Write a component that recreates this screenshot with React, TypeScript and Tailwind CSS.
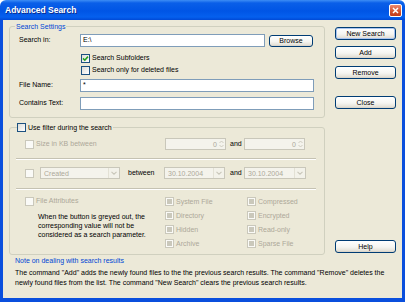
import React from "react";

type CheckProps = { checked?: boolean; disabled?: boolean; mixed?: boolean };

function Check({ checked = false, disabled = false, mixed = false }: CheckProps) {
  return (
    <span
      className={`flex h-[9px] w-[9px] shrink-0 items-center justify-center border ${
        disabled
          ? "border-[#CAC8BB] bg-[#FAFAF7]"
          : "border-[#1C5180] bg-[linear-gradient(135deg,#DCDCD7_0%,#FFFFFF_100%)]"
      }`}
    >
      {checked && (
        <svg width="7" height="7" viewBox="0 0 7 7">
          <path d="M1 3.4 L2.8 5.2 L6 1.6" stroke="#21A121" strokeWidth="1.6" fill="none" />
        </svg>
      )}
      {mixed && <span className="h-[5px] w-[5px] bg-[#CAC8BB]" />}
    </span>
  );
}

function XPButton({ label, isDefault = false, className = "" }: { label: string; isDefault?: boolean; className?: string }) {
  return (
    <div
      className={`flex h-[13px] w-[61px] items-center justify-center rounded-[3px] border border-[#003C74] bg-[linear-gradient(180deg,#FFFFFF_0%,#F5F5F1_55%,#E6E3DA_85%,#D6D0C5_100%)] text-[7px] leading-none text-black ${
        isDefault ? "shadow-[inset_0_0_0_1px_#A9C4F0]" : ""
      } ${className}`}
    >
      {label}
    </div>
  );
}

function Arrow() {
  return (
    <span className="flex h-full w-[11px] items-center justify-center border-l border-[#E3E1D5] bg-[#F3F2EA]">
      <svg width="6" height="4" viewBox="0 0 6 4">
        <path d="M0.5 0.8 L3 3.2 L5.5 0.8" stroke="#C9C7BA" strokeWidth="1.1" fill="none" />
      </svg>
    </span>
  );
}

function Combo({ value, width }: { value: string; width: string }) {
  return (
    <div className={`flex h-[12px] ${width} items-center border border-[#C9C7BA] bg-[#F4F3EC]`}>
      <span className="flex-1 pl-[3px] text-[7px] leading-none text-[#ACA899]">{value}</span>
      <Arrow />
    </div>
  );
}

function Spinner() {
  return (
    <div className="flex h-[12px] w-[61px] items-center justify-end border border-[#C9C7BA] bg-[#F4F3EC] pr-[1px]">
      <span className="text-[7px] leading-none text-[#ACA899]">0</span>
      <svg className="ml-[2px]" width="5" height="8" viewBox="0 0 5 8">
        <path d="M0.5 3 L2.5 1 L4.5 3 M0.5 5 L2.5 7 L4.5 5" stroke="#C9C7BA" strokeWidth="0.9" fill="none" />
      </svg>
    </div>
  );
}

function Separator() {
  return <div className="ml-[6px] h-[2px] w-[300px] border-t border-b border-t-[#C5C2B2] border-b-white" />;
}

function Attr({ label }: { label: string }) {
  return (
    <div className="flex h-[12px] items-center">
      <Check disabled mixed />
      <span className="ml-[2px] text-[7px] leading-none text-[#ACA899]">{label}</span>
    </div>
  );
}

export default function App() {
  return (
    <div className="flex h-[302px] w-[405px] flex-col overflow-hidden rounded-t-[6px] font-['Liberation_Sans',Arial,sans-serif] text-[7px] text-black">
      {/* title bar */}
      <div className="flex h-[20px] shrink-0 items-center justify-between bg-[linear-gradient(180deg,#3D8DF5_0%,#0A5FE8_15%,#0055E5_55%,#0560EE_85%,#0049D6_100%)] pl-[5px] pr-[3px]">
        <span className="text-[8.5px] font-bold leading-none text-white [text-shadow:1px_1px_0_#0A2C8C]">Advanced Search</span>
        <div className="flex h-[13px] w-[13px] items-center justify-center rounded-[2px] border border-white bg-[linear-gradient(180deg,#EB8A70_0%,#D5552F_55%,#C23C1B_100%)]">
          <svg width="7" height="7" viewBox="0 0 7 7">
            <path d="M1 1 L6 6 M6 1 L1 6" stroke="white" strokeWidth="1.5" />
          </svg>
        </div>
      </div>

      {/* body */}
      <div className="flex flex-1 flex-col border-x-[3px] border-b-[4px] border-[#0A4FDD] bg-[#ECE9D8]">
        {/* settings + buttons */}
        <div className="flex items-start">
          <div className="relative ml-[6px] mt-[6px] h-[92px] w-[316px] rounded-[3px] border border-[#D0D0BF]">
            <span className="absolute left-[5px] top-[-5px] bg-[#ECE9D8] px-[1px] text-[7px] leading-[9px] text-[#0046D5]">
              Search Settings
            </span>
            <div className="flex flex-col pt-[7px]">
              <div className="flex h-[13px] items-center">
                <span className="ml-[9px] w-[61px]">Search in:</span>
                <div className="flex h-[13px] w-[185px] items-center border border-[#7F9DB9] bg-white pl-[2px]">E:\</div>
                <XPButton label="Browse" className="ml-[4px] !h-[12px] !w-[44px]" />
              </div>
              <div className="mt-[5px] flex h-[12px] items-center pl-[71px]">
                <Check checked />
                <span className="ml-[2px]">Search Subfolders</span>
              </div>
              <div className="flex h-[12px] items-center pl-[71px]">
                <Check />
                <span className="ml-[2px]">Search only for deleted files</span>
              </div>
              <div className="mt-[3px] flex h-[13px] items-center">
                <span className="ml-[9px] w-[61px]">File Name:</span>
                <div className="flex h-[13px] w-[234px] items-center border border-[#7F9DB9] bg-white pl-[2px]">*</div>
              </div>
              <div className="mt-[5px] flex h-[13px] items-center">
                <span className="ml-[9px] w-[61px]">Contains Text:</span>
                <div className="h-[13px] w-[234px] border border-[#7F9DB9] bg-white" />
              </div>
            </div>
          </div>
          <div className="ml-[10px] mt-[7px] flex flex-col">
            <XPButton label="New Search" isDefault />
            <XPButton label="Add" className="mt-[6px]" />
            <XPButton label="Remove" className="mt-[7px]" />
            <XPButton label="Close" className="mt-[17px]" />
          </div>
        </div>

        {/* filter + help */}
        <div className="mt-[9px] flex items-end">
          <div className="relative ml-[6px] h-[128px] w-[316px] rounded-[3px] border border-[#D0D0BF]">
            <div className="absolute left-[7px] top-[-5px] flex h-[9px] items-center bg-[#ECE9D8] pr-[1px]">
              <Check />
              <span className="ml-[2px] leading-none">Use filter during the search</span>
            </div>
            <div className="flex flex-col pt-[10px]">
              <div className="flex h-[12px] items-center">
                <div className="ml-[15px] flex w-[140px] items-center">
                  <Check disabled />
                  <span className="ml-[2px] text-[#ACA899]">Size in KB between</span>
                </div>
                <Spinner />
                <span className="ml-[4px] w-[14px]">and</span>
                <Spinner />
              </div>
              <div className="mt-[8px]">
                <Separator />
              </div>
              <div className="mt-[7px] flex h-[12px] items-center">
                <div className="ml-[15px]">
                  <Check disabled />
                </div>
                <div className="ml-[6px]">
                  <Combo value="Created" width="w-[80px]" />
                </div>
                <span className="ml-[8px] w-[36px]">between</span>
                <Combo value="30.10.2004" width="w-[61px]" />
                <span className="ml-[5px] w-[14px]">and</span>
                <Combo value="30.10.2004" width="w-[62px]" />
              </div>
              <div className="mt-[9px]">
                <Separator />
              </div>
              <div className="mt-[5px] flex">
                <div className="ml-[15px] flex w-[140px] flex-col">
                  <div className="flex h-[12px] items-center">
                    <Check disabled />
                    <span className="ml-[2px] text-[#ACA899]">File Attributes</span>
                  </div>
                  <p className="ml-[13px] mt-[5px] leading-[9px]">
                    When the button is greyed out, the
                    <br />
                    corresponding value will not be
                    <br />
                    considered as a search parameter.
                  </p>
                </div>
                <div className="flex w-[82px] flex-col gap-[2px]">
                  <Attr label="System File" />
                  <Attr label="Directory" />
                  <Attr label="Hidden" />
                  <Attr label="Archive" />
                </div>
                <div className="flex flex-col gap-[2px]">
                  <Attr label="Compressed" />
                  <Attr label="Encrypted" />
                  <Attr label="Read-only" />
                  <Attr label="Sparse File" />
                </div>
              </div>
            </div>
          </div>
          <XPButton label="Help" className="mb-[2px] ml-[10px]" />
        </div>

        {/* note */}
        <div className="ml-[12px] mt-[1px] flex flex-col">
          <span className="leading-[9px] text-[#0046D5]">Note on dealing with search results</span>
          <p className="mt-[3px] leading-[10px]">
            The command "Add" adds the newly found files to the the previous search results. The command "Remove" deletes the
            <br />
            newly found files from the list. The command "New Search" clears the previous search results.
          </p>
        </div>
      </div>
    </div>
  );
}
